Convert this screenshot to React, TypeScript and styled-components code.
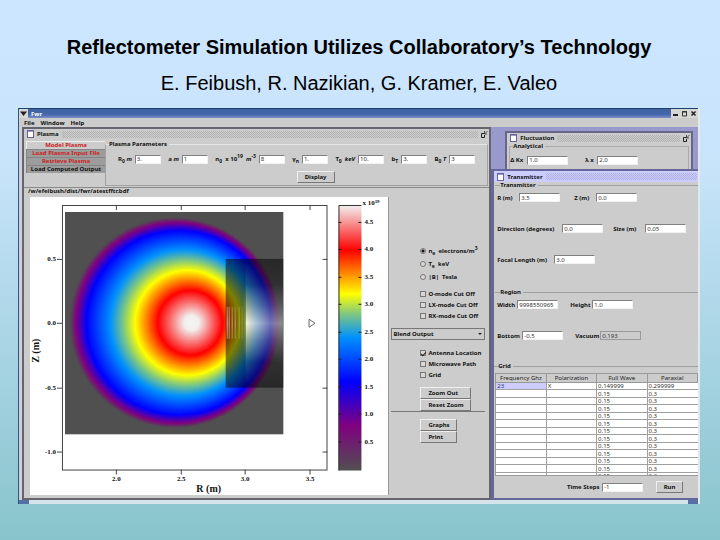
import React from "react";
import styled, { createGlobalStyle } from "styled-components";

const Global = createGlobalStyle`
  * { box-sizing: border-box; }
  body {
    margin: 0;
    font-family: "Noto Sans", "Open Sans", sans-serif;
  }
`;

const Slide = styled.main`
  min-height: 100vh;
  padding: 36px 20px 35px 18px;
  background: linear-gradient(#cce6ff 0%, #c8e4fb 30%, #88c4cc 100%);
`;

const Title = styled.h1`
  margin: 0;
  font: bold 20px/22px "Liberation Sans", Arial, sans-serif;
  text-align: center;
`;

const Authors = styled.p`
  margin: 14px 0;
  font: 20px/22px "Liberation Sans", Arial, sans-serif;
  text-align: center;
`;

const AppWindow = styled.section`
  border-left: 1px solid #2f5588;
  border-right: 2px solid #dfe9ee;
  background: #cccccc;
  color: #111;
  font-size: 6px;
  font-weight: bold;
  line-height: 8px;
`;

const WindowBar = styled.header`
  display: flex;
  align-items: center;
  gap: 3px;
  height: 10px;
  border-top: 1px solid #1f3f70;
  background: linear-gradient(#3f62a0, #4466ac 60%, #7a90c4);
  color: #fff;
`;

const WindowTitle = styled.span`
  flex: 1;
`;

const BarButtons = styled.div`
  display: flex;
`;

const BarButton = styled.button`
  display: flex;
  width: 9px;
  height: 9px;
  padding: 1px;
  border: 0;
  background: #d6d6d2;
`;

const MenuBar = styled.nav`
  display: flex;
  gap: 6px;
  height: 9px;
  padding-left: 5px;
`;

const MenuItem = styled.button`
  padding: 0;
  border: 0;
  background: none;
  color: inherit;
  font: inherit;
`;

const Desktop = styled.div`
  display: flex;
  padding-left: 3px;
  background: #cfcfd6;
`;

const WindowFoot = styled.footer`
  display: flex;
  justify-content: space-between;
  height: 4px;
  background: #d4e4ea;
`;

const Grip = styled.span`
  width: 10px;
  background: #5570a4;
`;

const PlasmaFrame = styled.section`
  flex: 468 1 0;
  min-width: 0;
  border: 2px solid #66646c;
  background: #cccccc;
`;

const RightSide = styled.div`
  display: flex;
  flex: 208 1 0;
  flex-direction: column;
  min-width: 0;
  background: #9999cc;
`;

const FrameBar = styled.header<{ $active?: boolean }>`
  display: flex;
  align-items: center;
  gap: 3px;
  height: ${(p) => (p.$active ? 11 : 10)}px;
  padding: 0 1px 0 3px;
  background: ${(p) => (p.$active ? "#ccccff" : "#cccccc")};
`;

const Texture = styled.span<{ $active?: boolean }>`
  flex: 1;
  height: 7px;
  background: repeating-conic-gradient(${(p) => (p.$active ? "#b0b0e4" : "#b2b2b2")} 0 25%, transparent 0 50%) 0 0 / 2px 2px;
`;

const FrameBody = styled.div`
  display: flex;
  padding: 2px 1px 0 2px;
  border-bottom: 1px solid #8a8a8a;
`;

const Tabs = styled.div`
  display: flex;
  flex-direction: column;
  width: 79px;
  height: 46px;
`;

const Tab = styled.button<{ $active?: boolean; $plain?: boolean }>`
  height: 8px;
  padding: 0;
  border: 1px solid ${(p) => (p.$active ? "#eeeeee" : "#858585")};
  border-width: 1px 0 0 1px;
  background: ${(p) => (p.$active ? "#cccccc" : "#9c9c9c")};
  color: ${(p) => (p.$plain ? "#111" : "#cc2222")};
  font: inherit;
  line-height: 7px;
  white-space: nowrap;
`;

const Params = styled.fieldset`
  display: flex;
  flex: 1;
  flex-direction: column;
  gap: 6px;
  min-width: 0;
  height: 45px;
  margin: 0;
  padding: 6px 0 0;
  border: 1px solid #a2a2a2;
  border-top-color: #e6e6e6;
`;

const Legend = styled.legend`
  margin-left: 3px;
  padding: 0 2px 0 0;
  line-height: 6px;
`;

const ParamRow = styled.div`
  display: flex;
  justify-content: space-between;
  padding: 0 12px;
`;

const DisplayRow = styled.div`
  display: flex;
  justify-content: center;
  padding-left: 38px;
`;

const Param = styled.label`
  display: flex;
  align-items: center;
  gap: 3px;
  height: 12px;
  white-space: nowrap;

  sub, sup { font-size: 5px; line-height: 0; }
`;

const Field = styled.input<{ $w: number }>`
  width: ${(p) => p.$w}px;
  height: 9px;
  padding: 0 1px;
  border: 1px solid;
  border-color: #808080 #f2f2f2 #f2f2f2 #808080;
  border-radius: 0;
  background: #fff;
  color: #333;
  font: 6px/7px "Noto Sans", sans-serif;

  &:read-only {
    border-color: #999;
    background: #cccccc;
  }
`;

const Push = styled.button<{ $w: number; $start?: boolean }>`
  width: ${(p) => p.$w}px;
  height: 12px;
  padding: 0 ${(p) => (p.$start ? 7 : 0)}px;
  border: 1px solid;
  border-color: #f0f0f0 #777 #777 #f0f0f0;
  background: #cccccc;
  color: inherit;
  font: inherit;
  line-height: 9px;
  text-align: ${(p) => (p.$start ? "left" : "center")};
  white-space: nowrap;
`;

const FilePath = styled.div`
  height: 9px;
  padding-left: 4px;
  line-height: 7px;
`;

const PlotArea = styled.div`
  display: flex;
  padding: 0 0 3px 6px;
`;

const ChartBox = styled.figure`
  flex: 359 1 0;
  min-width: 0;
  margin: 0;
  border-right: 1px solid #999;
  background: #fff;

  svg { display: block; width: 100%; height: auto; }
`;

const Controls = styled.form`
  display: flex;
  flex: 94 1 0;
  flex-direction: column;
  gap: 7px;
  min-width: 0;
  padding: 49px 4px 0 2px;
`;

const Group = styled.div<{ $gap?: number }>`
  display: flex;
  flex-direction: column;
  align-items: flex-start;
  gap: ${(p) => p.$gap ?? 1}px;
  padding-left: 29px;
`;

const Choice = styled.label`
  display: flex;
  align-items: center;
  gap: 2px;
  height: 10px;
  white-space: nowrap;

  sub, sup { font-size: 5px; line-height: 0; }
`;

const Mark = styled.input`
  appearance: none;
  display: grid;
  place-items: center;
  width: 6px;
  height: 6px;
  margin: 0;
  border: 1px solid #777;
  border-radius: ${(p) => (p.type === "radio" ? "50%" : "0")};
  background: #d8d8d8;

  &[type="radio"]:checked { background: radial-gradient(#111 0 1px, #d8d8d8 2px); }
  &[type="checkbox"]:checked::before {
    content: "";
    width: 4px;
    height: 2px;
    border: solid #222;
    border-width: 0 0 1px 1px;
    transform: rotate(-45deg);
  }
`;

const SelectWrap = styled.div`
  position: relative;
  height: 13px;

  &::after {
    content: "";
    position: absolute;
    top: 5px;
    right: 3px;
    border: 2px solid transparent;
    border-top-color: #222;
    pointer-events: none;
  }
`;

const Output = styled.select`
  display: block;
  width: 100%;
  height: 12px;
  margin: 0;
  padding: 0 1px;
  appearance: none;
  border: 1px solid #777;
  border-radius: 0;
  background: #cccccc;
  color: inherit;
  font: inherit;
`;

const Stack = styled.div`
  display: flex;
  flex-direction: column;
  gap: 7px;
`;

const Divided = styled.div`
  border-bottom: 1px solid #777;
`;

const Fluctuation = styled.section`
  margin: 4px 5px 0 14px;
  border: 2px solid #666688;
  border-bottom: 0;
  background: #cccccc;
`;

const FluctuationSet = styled.fieldset`
  display: flex;
  gap: 17px;
  height: 26px;
  margin: 0 2px;
  padding: 2px 0 0;
  border: solid #aaa;
  border-width: 1px 1px 0;
  min-width: 0;
`;

const Transmitter = styled.section`
  flex: 1;
  border: solid #666699;
  border-width: 2px 0 2px 3px;
  background: #cccccc;
`;

const Section = styled.fieldset<{ $h: number }>`
  display: flex;
  flex-direction: column;
  gap: 22px;
  min-width: 0;
  min-height: ${(p) => p.$h}px;
  margin: 0 0 0 1px;
  padding: 5px 0 0 2px;
  border: solid #a0a0a0;
  border-width: 1px 0 0;
`;

const FieldRow = styled.div<{ $gap: number }>`
  display: flex;
  gap: ${(p) => p.$gap}px;
`;

const Labelled = styled.label`
  display: flex;
  align-items: center;
  gap: 2px;
  white-space: nowrap;
`;

const Name = styled.span<{ $w: number }>`
  width: ${(p) => p.$w}px;
`;

const TableBox = styled.div`
  height: 103px;
  overflow: hidden;
  border-bottom: 1px solid #999;
  background: #fff;
`;

const Table = styled.table`
  width: 100%;
  table-layout: fixed;
  border-collapse: collapse;
  font-weight: normal;
  color: #333;

  th {
    height: 9px;
    padding: 0;
    border: 1px solid #999;
    background: #cccccc;
    color: #222;
    font-weight: normal;
    line-height: 7px;
    white-space: nowrap;
  }
  td {
    padding: 0 1px;
    border: solid #a0a0a0;
    border-width: 0 0 1px 1px;
    line-height: 6px;
  }
  tbody tr { height: 8px; }
  tbody tr:nth-child(odd) { height: 7px; }
`;

const Picked = styled.td`
  background: #ccccff;
  color: #333366;
`;

const GridSet = styled.fieldset`
  min-width: 0;
  margin: 0;
  padding: 4px 0 0 1px;
  border: solid #a0a0a0;
  border-width: 1px 0 0;
`;

const RunRow = styled.div`
  display: flex;
  align-items: center;
  justify-content: flex-end;
  gap: 13px;
  height: 22px;
  padding-right: 15px;
`;

type Stop = [number, string];

// Colour scale from the vacuum level (0) up to the densest plasma (1).
const scale: Stop[] = [
  [0, "#505050"],
  [0.17, "#800080"],
  [0.335, "#0000ff"],
  [0.5, "#0090ff"],
  [0.59, "#80c880"],
  [0.665, "#ffff00"],
  [0.83, "#ff0000"],
  [1, "#f2f2f2"],
];

// The same colours by flux-surface radius.
const radii: Stop[] = [
  [0, "#f4f4f4"],
  [8, "#f3eeee"],
  [33, "#ff0000"],
  [53, "#ffff00"],
  [63, "#80c880"],
  [74, "#0090ff"],
  [93, "#0000ff"],
  [101, "#800080"],
  [106, "#505050"],
];

const channels = (hex: string) =>
  [1, 3, 5].map((i) => parseInt(hex.slice(i, i + 2), 16));

function colourAt(r: number) {
  const i = Math.max(1, radii.findIndex(([stop]) => stop >= r));
  const [r0, c0] = radii[i - 1];
  const [r1, c1] = radii[i];
  const t = (r - r0) / (r1 - r0);
  const from = channels(c0);
  const to = channels(c1);
  return `rgb(${from.map((v, k) => Math.round(v + (to[k] - v) * t)).join(",")})`;
}

const surfaces = Array.from({ length: 106 }, (_, i) => {
  const r = 106 - i;
  return { r, cx: 162 - 17 * (r / 106) ** 2, fill: colourAt(r) };
});

const px = (radius: number) => Math.round(86 + (radius - 2) * 129) + 0.5;
const py = (height: number) => Math.round(126 - height * 129) + 0.5;

const stripes = [197, 199, 202, 205, 209, 212];

function PlasmaChart() {
  return (
    <svg viewBox="0 0 359 299" role="img" aria-label="Plasma cross section">
      <defs>
        <clipPath id="grid"><rect x="35" y="15" width="219" height="223" /></clipPath>
        <linearGradient id="bar" x1="0" y1="1" x2="0" y2="0">
          {scale.map(([at, c]) => <stop key={at} offset={at} stopColor={c} />)}
        </linearGradient>
        <linearGradient id="wave" x1="0" x2="1" y1="0" y2="0">
          <stop offset="0" stopColor="#ffffe8" stopOpacity="0.95" />
          <stop offset="0.25" stopColor="#e0e8f0" stopOpacity="0.8" />
          <stop offset="0.65" stopColor="#c0c0e0" stopOpacity="0.6" />
          <stop offset="1" stopColor="#a0a0a0" stopOpacity="0.8" />
        </linearGradient>
        <linearGradient id="fade" x1="0" x2="0" y1="0" y2="1">
          <stop offset="0" stopColor="#000" />
          <stop offset="0.2" stopColor="#181818" />
          <stop offset="0.36" stopColor="#808080" />
          <stop offset="0.5" stopColor="#fff" />
          <stop offset="0.64" stopColor="#808080" />
          <stop offset="0.8" stopColor="#181818" />
          <stop offset="1" stopColor="#000" />
        </linearGradient>
        <mask id="beam"><rect x="190" y="62" width="64" height="129" fill="url(#fade)" /></mask>
      </defs>
      <g clipPath="url(#grid)">
        <rect x="35" y="15" width="219" height="223" fill="#505050" />
        {surfaces.map((s) => <circle key={s.r} cx={s.cx} cy="126" r={s.r} fill={s.fill} />)}
        <rect x="196" y="62" width="58" height="129" fill="#000" fillOpacity="0.5" />
        <g mask="url(#beam)">
          <rect x="216" y="62" width="38" height="129" fill="url(#wave)" />
          {stripes.map((x, i) => (
            <rect key={x} x={x} y="110" width="1" height="32" fill="#fff0d0" fillOpacity={0.8 - i * 0.11} />
          ))}
          <rect x="214" y="94" width="1" height="64" fill="#e0e060" fillOpacity="0.4" />
        </g>
      </g>
      <g fill="none" stroke="#444">
        <rect x="32.5" y="8.5" width="265" height="265" />
        {[2, 2.5, 3, 3.5].map((v) => (
          <path key={v} d={`M${px(v)} 8v5M${px(v)} 273v5`} />
        ))}
        {[0.5, 0, -0.5, -1].map((v) => (
          <path key={v} d={`M27 ${py(v)}h5${v === 0 ? "" : `M293 ${py(v)}h5`}`} />
        ))}
        <path d="M279.5 122.5v8l6-4z" strokeWidth="0.8" />
      </g>
      <rect x="309" y="8" width="23" height="266" fill="url(#bar)" />
      <path d="M309.500 274V8.500H332" fill="none" stroke="#333" />
      <g fontFamily="Liberation Serif, serif" fontSize="7" fontWeight="bold" fill="#111">
        {[0.5, 0, -0.5, -1].map((v) => (
          <text key={v} x="26" y={py(v) + 2} textAnchor="end">{v.toFixed(1)}</text>
        ))}
        {[2, 2.5, 3, 3.5].map((v) => (
          <text key={v} x={px(v)} y="284" textAnchor="middle">{v.toFixed(1)}</text>
        ))}
        {[4.5, 4, 3.5, 3, 2.5, 2, 1.5, 1, 0.5].map((v) => {
          const y = Math.round(272 - v * 55) + 0.5;
          return (
            <g key={v}>
              <path d={`M309 ${y}h3M329 ${y}h3`} stroke="#222" />
              <text x="335" y={y + 2}>{v.toFixed(1)}</text>
            </g>
          );
        })}
        <text x="333" y="8">x 10<tspan dy="-2" fontSize="5">19</tspan></text>
        <text x="179" y="296" fontSize="10" textAnchor="middle">R (m)</text>
        <text x="0" y="0" fontSize="10" textAnchor="middle" transform="translate(9 154) rotate(-90)">Z (m)</text>
      </g>
    </svg>
  );
}

const FrameIcon = () => (
  <svg width="7" height="8" viewBox="0 0 7 8" aria-hidden="true">
    <rect x="0.5" y="0.5" width="6" height="7" fill="#fff" stroke="#666699" />
    <path d="M1 1.500h5" stroke="#9999cc" />
  </svg>
);

const ExpandIcon = () => (
  <svg width="7" height="8" viewBox="0 0 7 8" aria-hidden="true">
    <path d="M3 3.500H.5v4h3V5" fill="none" stroke="#222" />
    <path d="M3.500 1v3H6M3.500 4L6.500 1" fill="none" stroke="#333" strokeWidth="0.8" />
  </svg>
);

const params: { name: React.ReactNode; value: string }[] = [
  { name: <>R<sub>0</sub> <i>m</i></>, value: "3." },
  { name: <>a <i>m</i></>, value: "1" },
  { name: <>n<sub>0</sub>&nbsp; x 10<sup>19</sup>&nbsp; <i>m</i><sup>-3</sup></>, value: "8" },
  { name: <>γ<sub>n</sub></>, value: "1." },
  { name: <>T<sub>0</sub>&nbsp; <i>keV</i></>, value: "10." },
  { name: <>b<sub>T</sub></>, value: "3." },
  { name: <>B<sub>0</sub> <i>T</i></>, value: "3" },
];

type Entry = { name: string; w: number; value: string; fixed?: boolean };

const Entries = ({ gap, items }: { gap: number; items: Entry[] }) => (
  <FieldRow $gap={gap}>
    {items.map((e) => (
      <Labelled key={e.name}>
        <Name $w={e.w}>{e.name}</Name>
        <Field $w={41} defaultValue={e.value} readOnly={e.fixed} />
      </Labelled>
    ))}
  </FieldRow>
);

export default function App() {
  return (
    <Slide>
      <Global />
      <Title>Reflectometer Simulation Utilizes Collaboratory’s Technology</Title>
      <Authors>E. Feibush, R. Nazikian, G. Kramer, E. Valeo</Authors>
      <AppWindow>
        <WindowBar>
          <BarButton aria-label="Window menu">
            <svg width="7" height="7" viewBox="0 0 7 7"><path d="M0 1.500h7L3.500 6z" fill="#222" /></svg>
          </BarButton>
          <WindowTitle>Fwr</WindowTitle>
          <BarButtons>
            <BarButton aria-label="Minimize">
              <svg width="7" height="7" viewBox="0 0 7 7"><path d="M1 5h5" stroke="#222" strokeWidth="2" /></svg>
            </BarButton>
            <BarButton aria-label="Maximize">
              <svg width="7" height="7" viewBox="0 0 7 7"><path d="M1.500 6V1.500h4V6zM1 2h5" fill="none" stroke="#333" /></svg>
            </BarButton>
            <BarButton aria-label="Close">
              <svg width="7" height="7" viewBox="0 0 7 7"><path d="M1.500 1.500l4 4M5.500 1.500l-4 4" stroke="#222" strokeWidth="1.500" /></svg>
            </BarButton>
          </BarButtons>
        </WindowBar>
        <MenuBar>
          <MenuItem>File</MenuItem>
          <MenuItem>Window</MenuItem>
          <MenuItem>Help</MenuItem>
        </MenuBar>
        <Desktop>
          <PlasmaFrame>
            <FrameBar><FrameIcon />Plasma<Texture /><ExpandIcon /></FrameBar>
            <FrameBody>
              <Tabs>
                <Tab $active>Model Plasma</Tab>
                <Tab>Load Plasma Input File</Tab>
                <Tab>Retrieve Plasma</Tab>
                <Tab $plain>Load Computed Output</Tab>
              </Tabs>
              <Params>
                <Legend>Plasma Parameters</Legend>
                <ParamRow>
                  {params.map((p, i) => (
                    <Param key={i}><span>{p.name}</span><Field $w={26} defaultValue={p.value} /></Param>
                  ))}
                </ParamRow>
                <DisplayRow><Push $w={38}>Display</Push></DisplayRow>
              </Params>
            </FrameBody>
            <FilePath>/w/efeibush/dist/fwr/atestfftr.bdf</FilePath>
            <PlotArea>
              <ChartBox><PlasmaChart /></ChartBox>
              <Controls>
                <Group $gap={3}>
                  <Choice><Mark type="radio" name="quantity" defaultChecked /><span>n<sub>e</sub>&nbsp; electrons/m<sup>3</sup></span></Choice>
                  <Choice><Mark type="radio" name="quantity" /><span>T<sub>e</sub>&nbsp; keV</span></Choice>
                  <Choice><Mark type="radio" name="quantity" /><span>|B|&nbsp; Tesla</span></Choice>
                </Group>
                <Group>
                  <Choice><Mark type="checkbox" />O-mode Cut Off</Choice>
                  <Choice><Mark type="checkbox" />LX-mode Cut Off</Choice>
                  <Choice><Mark type="checkbox" />RX-mode Cut Off</Choice>
                </Group>
                <SelectWrap>
                  <Output aria-label="Output"><option>Blend Output</option></Output>
                </SelectWrap>
                <Group>
                  <Choice><Mark type="checkbox" defaultChecked />Antenna Location</Choice>
                  <Choice><Mark type="checkbox" />Microwave Path</Choice>
                  <Choice><Mark type="checkbox" />Grid</Choice>
                </Group>
                <Stack>
                  <Divided>
                    <Group $gap={0}>
                      <Push type="button" $w={51} $start>Zoom Out</Push>
                      <Push type="button" $w={51} $start>Reset Zoom</Push>
                    </Group>
                  </Divided>
                  <Group $gap={0}>
                    <Push type="button" $w={37} $start>Graphs</Push>
                    <Push type="button" $w={37} $start>Print</Push>
                  </Group>
                </Stack>
              </Controls>
            </PlotArea>
          </PlasmaFrame>
          <RightSide>
            <Fluctuation>
              <FrameBar><FrameIcon />Fluctuation<Texture /><ExpandIcon /></FrameBar>
              <FluctuationSet>
                <Legend>Analytical</Legend>
                <Labelled><Name $w={15}>Δ Kx</Name><Field $w={41} defaultValue="1.0" /></Labelled>
                <Labelled><Name $w={10}>λ x</Name><Field $w={41} defaultValue="2.0" /></Labelled>
              </FluctuationSet>
            </Fluctuation>
            <Transmitter>
              <FrameBar $active><FrameIcon />Transmitter<Texture $active /></FrameBar>
              <Section $h={107}>
                <Legend>Transmitter</Legend>
                <Entries gap={14} items={[{ name: "R (m)", w: 20, value: "3.5" }, { name: "Z (m)", w: 20, value: "0.0" }]} />
                <Entries gap={10} items={[{ name: "Direction  (degrees)", w: 63, value: "0.0" }, { name: "Size  (m)", w: 30, value: "0.05" }]} />
                <Entries gap={10} items={[{ name: "Focal Length  (m)", w: 55, value: "3.0" }]} />
              </Section>
              <Section $h={74}>
                <Legend>Region</Legend>
                <Entries gap={12} items={[{ name: "Width", w: 18, value: "9998550965" }, { name: "Height", w: 20, value: "1.0" }]} />
                <Entries gap={12} items={[{ name: "Bottom", w: 23, value: "-0.5" }, { name: "Vacuum", w: 23, value: "0.193", fixed: true }]} />
              </Section>
              <GridSet>
                <Legend>Grid</Legend>
                <TableBox>
                  <Table>
                    <thead>
                      <tr><th>Frequency Ghz</th><th>Polarization</th><th>Full Wave</th><th>Paraxial</th></tr>
                    </thead>
                    <tbody>
                      <tr><Picked>23</Picked><td>X</td><td>0.149999</td><td>0.299999</td></tr>
                      {Array.from({ length: 12 }, (_, i) => (
                        <tr key={i}><td /><td /><td>0.15</td><td>0.3</td></tr>
                      ))}
                    </tbody>
                  </Table>
                </TableBox>
                <RunRow>
                  <Labelled><Name $w={33}>Time Steps</Name><Field $w={41} defaultValue="-1" /></Labelled>
                  <Push $w={27}>Run</Push>
                </RunRow>
              </GridSet>
            </Transmitter>
          </RightSide>
        </Desktop>
        <WindowFoot><Grip /><Grip /></WindowFoot>
      </AppWindow>
    </Slide>
  );
}
